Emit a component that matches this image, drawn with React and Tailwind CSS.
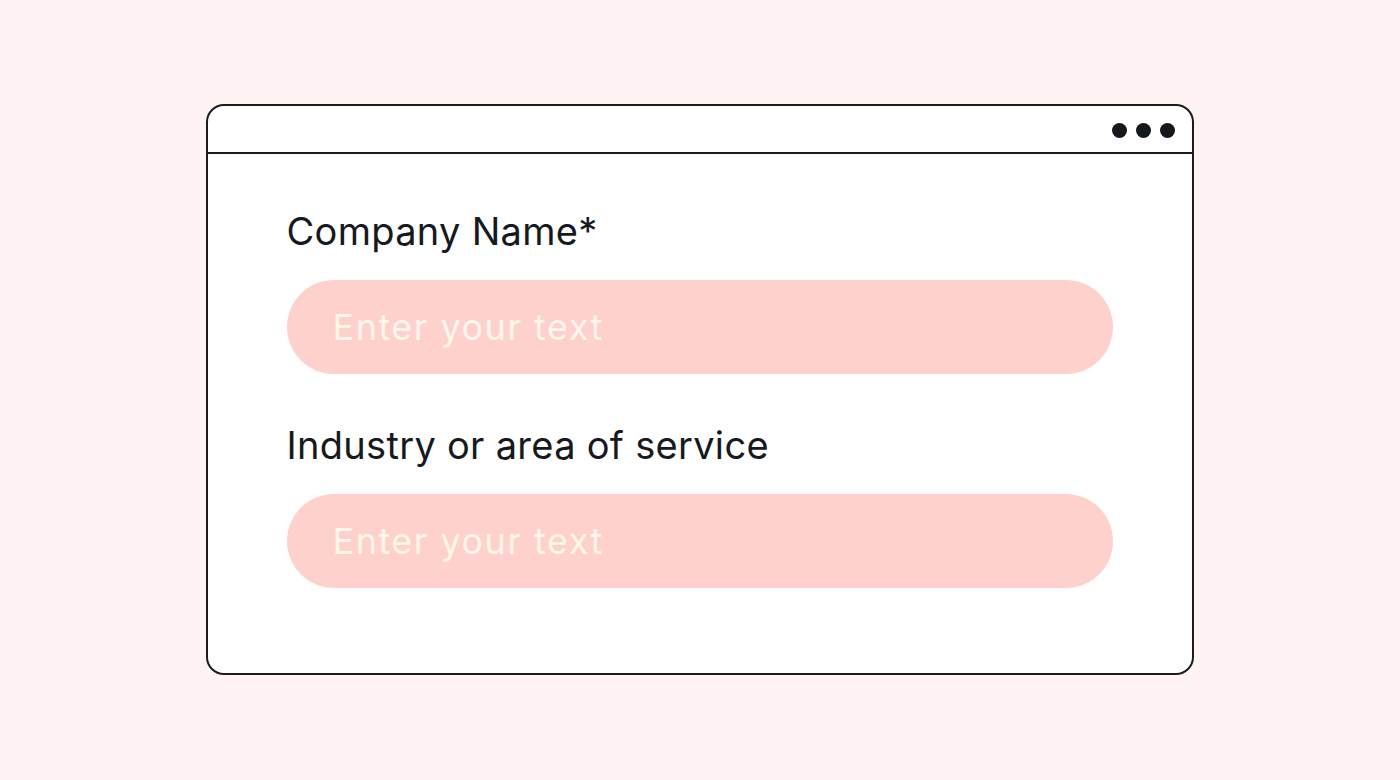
import React from 'react';

const Field = ({ label }) => (
  <div className="flex flex-col">
    <label className="text-[38px] leading-[44px] text-[#16191d] tracking-[0.3px]">{label}</label>
    <div className="mt-[27px] h-[94px] w-[826px] rounded-full bg-[#ffd1cd] flex items-center pl-[46px]">
      <span className="text-[36px] text-[#fff6ee] tracking-[1.5px]">Enter your text</span>
    </div>
  </div>
);

export default function App() {
  return (
    <div className="w-[1400px] h-[780px] bg-[#fff4f3] flex items-start justify-center pt-[104px]" style={{ fontFamily: 'Inter, "Noto Sans", sans-serif' }}>
      <div className="w-[988px] h-[571px] ml-[-1px] bg-white border-2 border-[#1c1c1e] rounded-[18px] flex flex-col">
        <div className="h-[48px] border-b-2 border-[#1c1c1e] flex items-center justify-end gap-[9px] pr-[17px] pt-[2px]">
          <span className="w-[15px] h-[15px] rounded-full bg-[#15181d]" />
          <span className="w-[15px] h-[15px] rounded-full bg-[#15181d]" />
          <span className="w-[15px] h-[15px] rounded-full bg-[#15181d]" />
        </div>
        <div className="flex flex-col gap-[49px] pl-[79px] pt-[55px]">
          <Field label="Company Name*" />
          <Field label="Industry or area of service" />
        </div>
      </div>
    </div>
  );
}
